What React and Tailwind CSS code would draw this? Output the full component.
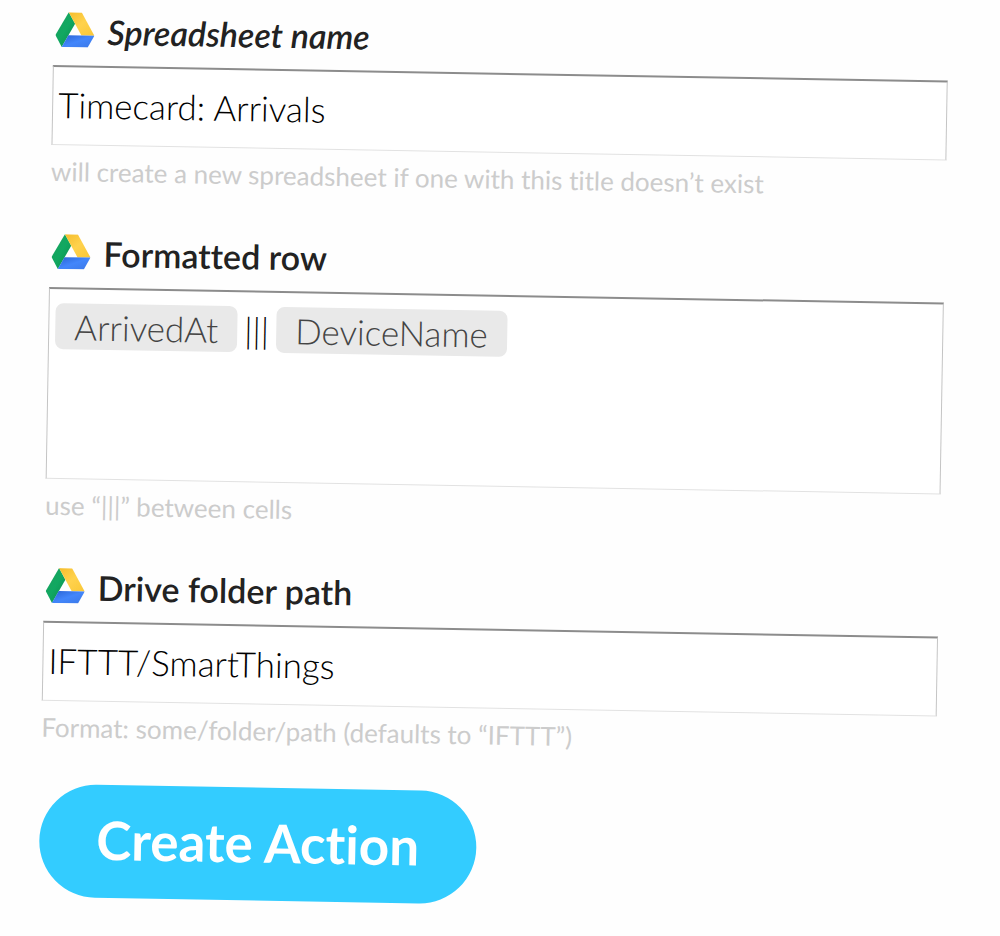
import { useState } from "react";

const DriveIcon = () => (
  <svg viewBox="0 0 39 35" className="w-[39px] h-[35px] shrink-0" aria-hidden="true">
    <defs>
      <linearGradient id="driveGreen" x1="0" y1="0" x2="1" y2="1">
        <stop offset="0" stopColor="#1a9f5d" />
        <stop offset="0.5" stopColor="#11a861" />
        <stop offset="1" stopColor="#0b8a4c" />
      </linearGradient>
      <linearGradient id="driveYellow" x1="0" y1="0" x2="1" y2="1">
        <stop offset="0" stopColor="#f5bd2c" />
        <stop offset="0.5" stopColor="#ffd24d" />
        <stop offset="1" stopColor="#f9c737" />
      </linearGradient>
      <linearGradient id="driveBlue" x1="0" y1="0" x2="1" y2="1">
        <stop offset="0" stopColor="#2a63d4" />
        <stop offset="0.5" stopColor="#4286fb" />
        <stop offset="1" stopColor="#3b78e7" />
      </linearGradient>
    </defs>
    <path d="M13 0 L0 23 L6.5 35 L19.5 11.5 Z" fill="url(#driveGreen)" />
    <path d="M13 0 H26 L39 23 H26 Z" fill="url(#driveYellow)" />
    <path d="M13 23 H39 L32.5 35 H6.5 Z" fill="url(#driveBlue)" />
  </svg>
);

const boxClass =
  "w-full bg-white border border-t-2 border-t-[#8c8c8c] border-x-[#c4c4c4] border-b-[#e2e2e2]";

const inputClass = "block h-20 px-[5px] pb-1 text-[35px] font-light text-black outline-none";

const helperClass = "mt-2 text-[26px] leading-9 text-[#cccccc]";

const labelClass =
  "flex items-center h-10 mb-4 pl-0.5 gap-[13px] text-[34px] font-semibold text-[#222222]";

const Token = ({ children }) => (
  <span className="rounded-lg bg-[#e9e9e9] px-[19px] h-[46px] leading-[46px] text-[#444444]">
    {children}
  </span>
);

const App = () => {
  const [name, setName] = useState("Timecard: Arrivals");
  const [path, setPath] = useState("IFTTT/SmartThings");

  return (
    <div className="min-h-screen overflow-hidden bg-[#fefefe] font-['Lato',sans-serif] [font-variant-ligatures:none]">
      <form
        className="origin-top-left rotate-1 pl-[54px] pr-[51px] pt-2"
        onSubmit={(e) => e.preventDefault()}
      >
        <div className="flex flex-col gap-[42px]">
          <div>
            <label htmlFor="name" className={labelClass}>
              <DriveIcon />
              <span className="pt-0.5 italic">Spreadsheet name</span>
            </label>
            <input
              id="name"
              type="text"
              value={name}
              onChange={(e) => setName(e.target.value)}
              className={`${boxClass} ${inputClass}`}
            />
            <p className={helperClass}>
              will create a new spreadsheet if one with this title doesn’t exist
            </p>
          </div>

          <div>
            <div id="row-label" className={labelClass}>
              <DriveIcon />
              <span className="pt-0.5">Formatted row</span>
            </div>
            <div
              role="group"
              aria-labelledby="row-label"
              className={`${boxClass} flex items-start gap-[7px] h-48 px-[6px] pt-[14px] text-[35px] leading-[46px] font-light text-black`}
            >
              <Token>ArrivedAt</Token>
              <span>|||</span>
              <Token>DeviceName</Token>
            </div>
            <p className={helperClass}>use “|||” between cells</p>
          </div>

          <div>
            <label htmlFor="path" className={labelClass}>
              <DriveIcon />
              <span className="pt-0.5">Drive folder path</span>
            </label>
            <input
              id="path"
              type="text"
              value={path}
              onChange={(e) => setPath(e.target.value)}
              className={`${boxClass} ${inputClass}`}
            />
            <p className={helperClass}>Format: some/folder/path (defaults to “IFTTT”)</p>
          </div>
        </div>

        <button
          type="submit"
          className="mt-[39px] h-[113px] rounded-full bg-[#33ccff] px-[57px] pb-1 text-[53px] font-bold text-white"
        >
          Create Action
        </button>
      </form>
    </div>
  );
};

export default App;
